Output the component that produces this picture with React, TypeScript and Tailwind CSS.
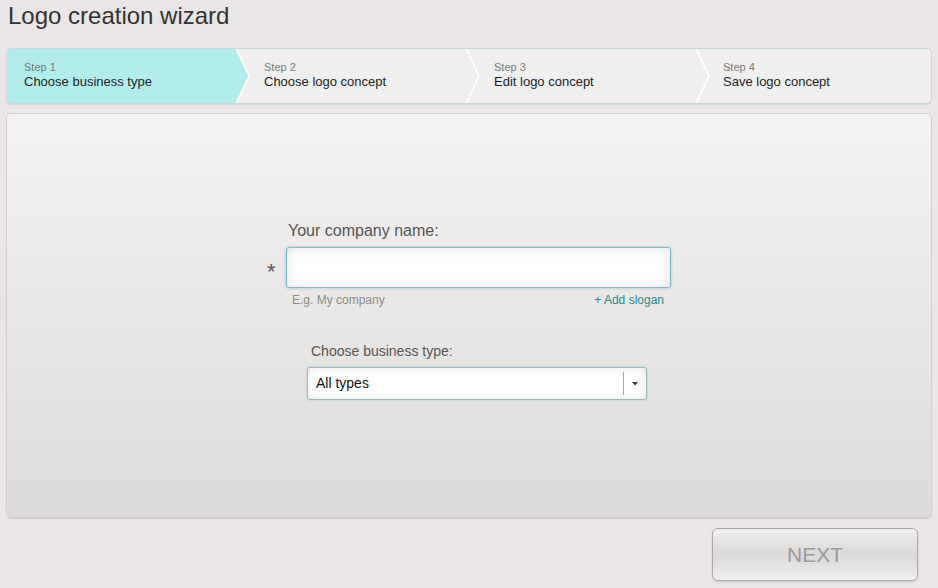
import { useState } from 'react';

const steps = [
  { label: 'Step 1', title: 'Choose business type' },
  { label: 'Step 2', title: 'Choose logo concept' },
  { label: 'Step 3', title: 'Edit logo concept' },
  { label: 'Step 4', title: 'Save logo concept' },
];

function Chevron({ active }: { active: boolean }) {
  return (
    <svg
      className="absolute left-full top-0 z-10"
      width="16"
      height="54"
      viewBox="0 0 16 54"
    >
      {active && <polygon points="0,0 13,27 0,54" fill="#b1eded" />}
      <polyline points="0,-1 13,27 0,55" fill="none" stroke="#ffffff" strokeWidth="1.6" />
    </svg>
  );
}

export default function App() {
  const [name, setName] = useState('');
  const current = 0;

  return (
    <div className="w-[938px] h-[588px] bg-[#eae6e7] font-['Liberation_Sans',Arial,sans-serif] overflow-hidden">
      {/* Title */}
      <h1 className="pl-[8px] pt-[2px] h-[48px] text-[24px] leading-[28px] text-[#333]">
        Logo creation wizard
      </h1>

      {/* Steps */}
      <div className="mx-[6px] h-[56px] flex rounded-[5px] border border-[#c9d8dc] bg-[#efefef] shadow-[0_1px_1px_rgba(0,0,0,0.08)]">
        {steps.map((step, index) => (
          <div
            key={step.label}
            className={
              'relative flex flex-col justify-center pb-[1px] ' +
              (index === 0
                ? 'w-[229px] pl-[17px] bg-[#b1eded] rounded-l-[4px]'
                : index === steps.length - 1
                  ? 'flex-1 pl-[27px]'
                  : 'w-[230px] pl-[28px]')
            }
          >
            <span className="text-[11px] leading-[13px] text-[#7a7a7a]">{step.label}</span>
            <span className="text-[13px] leading-[16px] text-[#1e1e1e]">{step.title}</span>
            {index < steps.length - 1 && <Chevron active={index === current} />}
          </div>
        ))}
      </div>

      {/* Panel */}
      <div className="mx-[6px] mt-[9px] h-[405px] rounded-[5px] border border-[#d2d0ce] bg-gradient-to-b from-[#f4f3f1] to-[#dcdbd9] shadow-[0_1px_1px_rgba(0,0,0,0.12)] flex flex-col items-center pt-[107px]">
        <div className="w-[404px] flex flex-col">
          <label className="pl-[21px] text-[16px] leading-[20px] text-[#555]">Your company name:</label>
          <div className="mt-[6px] flex items-center">
            <span className="w-[19px] text-[22px] leading-[22px] text-[#555] pt-[8px]">*</span>
            <input
              value={name}
              onChange={(e) => setName(e.target.value)}
              className="w-[385px] h-[41px] rounded-[3px] border border-[#7db9cc] bg-white px-[8px] text-[15px] outline-none shadow-[0_0_3px_rgba(90,170,200,0.6),inset_0_0_12px_rgba(0,0,0,0.12)]"
            />
          </div>
          <div className="mt-[5px] pl-[25px] pr-[7px] flex justify-between text-[12px] leading-[14px]">
            <span className="text-[#8a8a8a]">E.g. My company</span>
            <span className="text-[#2a8a8c]">+ Add slogan</span>
          </div>
        </div>

        <div className="mt-[36px] ml-[16px] w-[340px] flex flex-col">
          <label className="pl-[4px] text-[14px] leading-[17px] text-[#555]">Choose business type:</label>
          <div className="mt-[7px] h-[33px] flex items-center rounded-[3px] border border-[#9ab8c0] bg-white shadow-[0_0_2px_rgba(90,170,190,0.5),inset_0_0_10px_rgba(0,0,0,0.1)]">
            <span className="flex-1 pl-[8px] text-[14px] text-[#111]">All types</span>
            <div className="w-px h-[23px] bg-[#aaa]" />
            <div className="w-[22px] flex justify-center">
              <svg width="6" height="4" viewBox="0 0 6 4">
                <polygon points="0,0 6,0 3,3.5" fill="#1f3a40" />
              </svg>
            </div>
          </div>
        </div>
      </div>

      {/* Footer */}
      <div className="flex justify-end pr-[20px] mt-[10px]">
        <button className="w-[206px] h-[53px] rounded-[6px] border border-[#a9a9a9] bg-gradient-to-b from-[#f0eeef] via-[#dbd9da] to-[#efedee] text-[21px] text-[#9a9a9a] shadow-[0_1px_2px_rgba(0,0,0,0.15)]">
          NEXT
        </button>
      </div>
    </div>
  );
}
